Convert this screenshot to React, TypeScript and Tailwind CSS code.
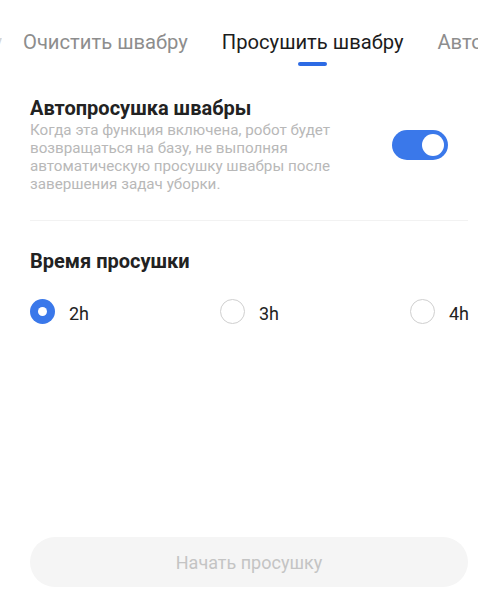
import { useState } from 'react';

const tabs = ['Очистить швабру', 'Просушить швабру', 'Автоочистка'];
const times = ['2h', '3h', '4h'];

export default function App() {
  const [autoDry, setAutoDry] = useState(true);
  const [time, setTime] = useState('2h');

  return (
    <div
      className="w-[500px] h-[600px] bg-white flex flex-col overflow-hidden"
      style={{ fontFamily: 'Roboto, "Noto Sans", sans-serif' }}
    >
      {/* Tabs */}
      <div className="w-[478px] overflow-hidden pt-[29px] flex items-start gap-[21px] whitespace-nowrap text-[20.2px] leading-[26px]">
        <div className="w-[2px] shrink-0 overflow-hidden flex justify-end text-[#d4d4d4]">
          <span className="shrink-0">Сушку</span>
        </div>
        <div className="flex gap-[34px]">
          {tabs.map((t, i) => (
            <div key={t} className="flex flex-col items-center shrink-0">
              <span className={i === 1 ? 'text-[#1c1c1c]' : 'text-[#8d8d8d]'}>{t}</span>
              <div
                className={`mt-[7px] w-[29px] h-[4px] rounded-full ${i === 1 ? 'bg-[#2d6be4]' : 'bg-transparent'}`}
              />
            </div>
          ))}
        </div>
      </div>

      {/* Auto dry */}
      <div className="px-[30px] pt-[30px]">
        <div className="flex items-start justify-between">
          <div className="w-[330px]">
            <div className="text-[20px] leading-[24px] font-bold text-[#222]">Автопросушка швабры</div>
            <p className="mt-[1px] text-[15.2px] leading-[18px] text-[#b8b8b8]">
              Когда эта функция включена, робот будет возвращаться на базу, не выполняя
              автоматическую просушку швабры после завершения задач уборки.
            </p>
          </div>
          <button
            onClick={() => setAutoDry(!autoDry)}
            className={`mt-[34px] mr-[22px] w-[56px] h-[30px] rounded-full flex items-center px-[4px] shrink-0 ${
              autoDry ? 'bg-[#3a78ea] justify-end' : 'bg-[#e0e0e0] justify-start'
            }`}
          >
            <span className="w-[22px] h-[22px] rounded-full bg-white" />
          </button>
        </div>
        <div className="mt-[27px] mr-[2px] h-px bg-[#f2f2f2]" />
      </div>

      {/* Drying time */}
      <div className="px-[30px] pt-[27px]">
        <div className="text-[20px] leading-[26px] font-bold text-[#222]">Время просушки</div>
        <div className="mt-[22px] flex">
          {times.map((t) => (
            <button key={t} onClick={() => setTime(t)} className="w-[190px] shrink-0 flex items-center">
              {time === t ? (
                <span className="w-[25px] h-[25px] rounded-full bg-[#3a78ea] flex items-center justify-center">
                  <span className="w-[9px] h-[9px] rounded-full bg-white" />
                </span>
              ) : (
                <span className="w-[25px] h-[25px] rounded-full border-[1.5px] border-[#cfcfcf]" />
              )}
              <span className="ml-[14px] mt-[4px] text-[18px] text-[#222]">{t}</span>
            </button>
          ))}
        </div>
      </div>

      <div className="flex-1" />

      {/* Start */}
      <div className="px-[30px] pb-[13px] pr-[32px]">
        <button className="w-full h-[50px] rounded-full bg-[#f5f5f5] text-[18px] text-[#c4c4c4]">
          Начать просушку
        </button>
      </div>
    </div>
  );
}
